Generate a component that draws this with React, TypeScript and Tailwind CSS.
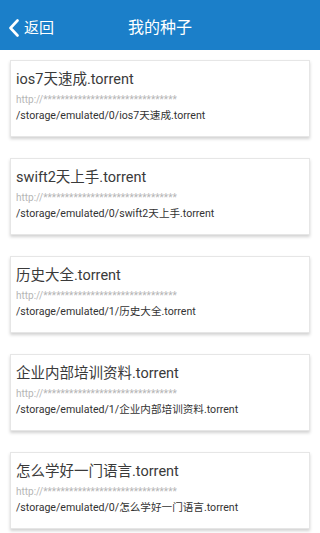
const seeds = [
  { name: 'ios7天速成.torrent', dir: '0' },
  { name: 'swift2天上手.torrent', dir: '0' },
  { name: '历史大全.torrent', dir: '1' },
  { name: '企业内部培训资料.torrent', dir: '1' },
  { name: '怎么学好一门语言.torrent', dir: '0' },
];

const stars = '*'.repeat(31);

export default function App() {
  return (
    <div className="w-[320px] h-[533px] overflow-hidden bg-white font-['Roboto','Noto_Sans_CJK_SC',sans-serif]">
      <div className="relative h-[50px] pt-[6px] bg-[#1b7fc9] flex items-center text-white">
        <div className="flex items-center pl-[8px]">
          <svg width="12" height="18" viewBox="0 0 12 18" fill="none">
            <polyline points="9.5,1.5 2.5,9 9.5,16.5" stroke="white" strokeWidth="2.6" strokeLinecap="round" strokeLinejoin="round" />
          </svg>
          <span className="text-[15px] ml-[4px]">返回</span>
        </div>
        <span className="absolute left-0 right-0 text-center text-[16px] pointer-events-none">我的种子</span>
      </div>
      <div className="flex flex-col gap-[21px] px-[10px] pt-[10px]">
        {seeds.map((s) => (
          <div
            key={s.name}
            className="h-[77px] bg-white border border-[#e6e6e6] shadow-[0_2px_3px_rgba(0,0,0,0.18)] px-[5px] pt-[9px]"
          >
            <div className="text-[14.5px] leading-[20px] text-[#3a3a3a]">{s.name}</div>
            <div className="text-[10px] leading-[13px] mt-[3px] text-[#b5b5b5]">http://{stars}</div>
            <div className="text-[10.6px] leading-[14px] mt-[3px] text-[#333]">
              /storage/emulated/{s.dir}/{s.name}
            </div>
          </div>
        ))}
      </div>
    </div>
  );
}
